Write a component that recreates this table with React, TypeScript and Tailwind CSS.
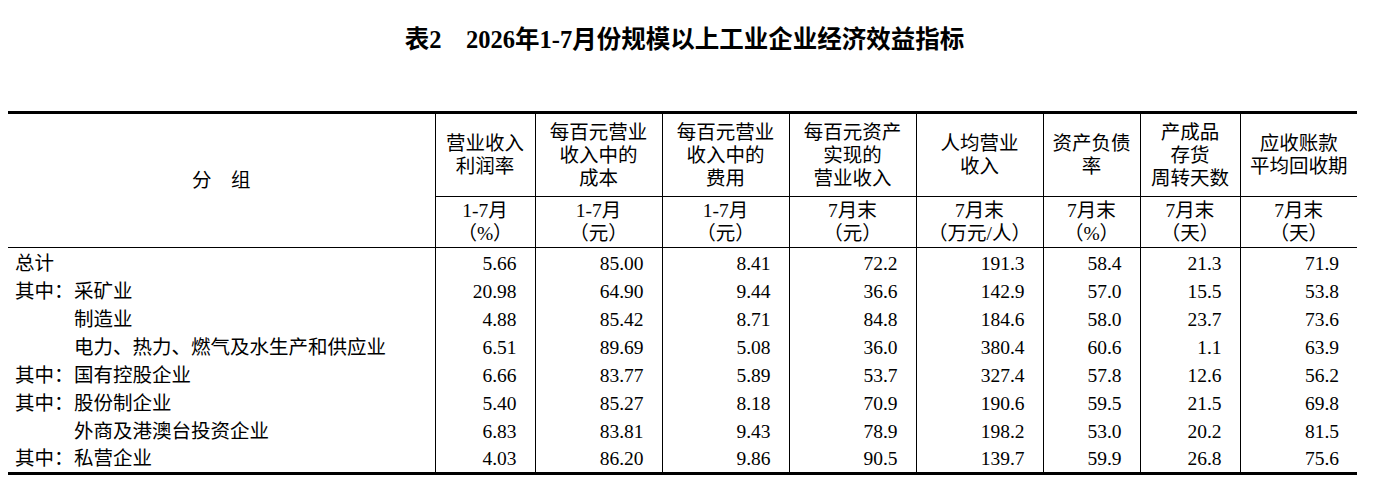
const font = { fontFamily: '"Liberation Serif", "Noto Sans CJK SC", serif' };

type Row = { prefix?: string; indent?: boolean; name: string; values: string[] };

const rows: Row[] = [
  { name: "总计", values: ["5.66", "85.00", "8.41", "72.2", "191.3", "58.4", "21.3", "71.9"] },
  { prefix: "其中：", name: "采矿业", values: ["20.98", "64.90", "9.44", "36.6", "142.9", "57.0", "15.5", "53.8"] },
  { indent: true, name: "制造业", values: ["4.88", "85.42", "8.71", "84.8", "184.6", "58.0", "23.7", "73.6"] },
  { indent: true, name: "电力、热力、燃气及水生产和供应业", values: ["6.51", "89.69", "5.08", "36.0", "380.4", "60.6", "1.1", "63.9"] },
  { prefix: "其中：", name: "国有控股企业", values: ["6.66", "83.77", "5.89", "53.7", "327.4", "57.8", "12.6", "56.2"] },
  { prefix: "其中：", name: "股份制企业", values: ["5.40", "85.27", "8.18", "70.9", "190.6", "59.5", "21.5", "69.8"] },
  { indent: true, name: "外商及港澳台投资企业", values: ["6.83", "83.81", "9.43", "78.9", "198.2", "53.0", "20.2", "81.5"] },
  { prefix: "其中：", name: "私营企业", values: ["4.03", "86.20", "9.86", "90.5", "139.7", "59.9", "26.8", "75.6"] },
];

const heads: { title: string[]; period: string; unit: string }[] = [
  { title: ["营业收入", "利润率"], period: "1-7月", unit: "（%）" },
  { title: ["每百元营业", "收入中的", "成本"], period: "1-7月", unit: "（元）" },
  { title: ["每百元营业", "收入中的", "费用"], period: "1-7月", unit: "（元）" },
  { title: ["每百元资产", "实现的", "营业收入"], period: "7月末", unit: "（元）" },
  { title: ["人均营业", "收入"], period: "7月末", unit: "（万元/人）" },
  { title: ["资产负债", "率"], period: "7月末", unit: "（%）" },
  { title: ["产成品", "存货", "周转天数"], period: "7月末", unit: "（天）" },
  { title: ["应收账款", "平均回收期"], period: "7月末", unit: "（天）" },
];

const widths = ["w-[427px]", "w-[100px]", "w-[127px]", "w-[127px]", "w-[127px]", "w-[127px]", "w-[97px]", "w-[100px]", "w-[117px]"];

export default function App() {
  return (
    <div className="w-[1377px] h-[489px] bg-white text-black" style={font}>
      <h1 className="pt-[26px] pr-[8px] text-center text-[24.5px] leading-[28px] font-bold">
        表2　2026年1-7月份规模以上工业企业经济效益指标
      </h1>
      <table className="ml-[8px] mt-[57px] w-[1348px] table-fixed border-collapse text-[19.5px] leading-[23px]">
        <colgroup>
          {widths.map((w, i) => (
            <col key={i} className={w} />
          ))}
        </colgroup>
        <thead>
          <tr className="border-t-[3px] border-black">
            <th rowSpan={2} className="border-r border-b border-black text-center font-normal">
              分　组
            </th>
            {heads.map((h, i) => (
              <th
                key={i}
                className={`h-[84px] border-b border-black text-center align-middle font-normal ${i < heads.length - 1 ? "border-r" : ""}`}
              >
                {h.title.map((t) => (
                  <div key={t}>{t}</div>
                ))}
              </th>
            ))}
          </tr>
          <tr>
            {heads.map((h, i) => (
              <th
                key={i}
                className={`h-[51px] border-b border-black text-center align-middle font-normal ${i < heads.length - 1 ? "border-r" : ""}`}
              >
                <div>{h.period}</div>
                <div>{h.unit}</div>
              </th>
            ))}
          </tr>
        </thead>
        <tbody className="border-b-[3px] border-black">
          {rows.map((r, idx) => (
            <tr key={r.name} className={idx === 0 ? "h-[30px]" : "h-[28px]"}>
              <td className={`border-r border-black pl-[7px] whitespace-nowrap ${idx === 0 ? "pt-[2px]" : ""}`}>
                <div className="flex">
                  {r.prefix ? <span className="w-[59px]">{r.prefix}</span> : r.indent ? <span className="w-[59px]" /> : null}
                  <span>{r.name}</span>
                </div>
              </td>
              {r.values.map((v, i) => (
                <td
                  key={i}
                  className={`text-right pr-[18px] ${idx === 0 ? "pt-[2px]" : ""} ${i < r.values.length - 1 ? "border-r border-black" : ""}`}
                >
                  {v}
                </td>
              ))}
            </tr>
          ))}
        </tbody>
      </table>
    </div>
  );
}
